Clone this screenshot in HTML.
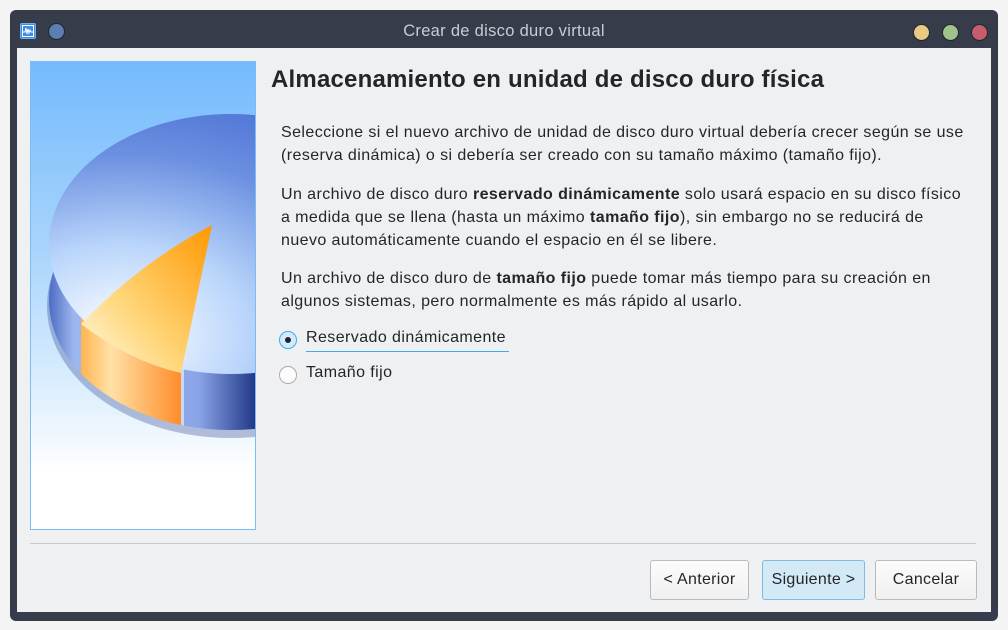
<!DOCTYPE html>
<html><head><meta charset="utf-8"><style>
html,body{margin:0;padding:0;width:1008px;height:630px;background:#f4f4f5;overflow:hidden;font-family:"Liberation Sans","DejaVu Sans",sans-serif;}
.win{position:absolute;left:10px;top:10px;width:988px;height:611px;background:#373c4a;border-radius:6px;}
.title{position:absolute;left:0;right:0;top:12px;text-align:center;color:#c8ccd4;font-size:16.5px;letter-spacing:0.3px}
.content{position:absolute;left:7px;top:38px;width:974px;height:564px;background:#eff0f1;}
.dot{position:absolute;top:14px;width:15px;height:15px;border-radius:50%;border:1px solid #23262e;}
.p{position:absolute;left:264px;white-space:nowrap;font-size:16px;letter-spacing:0.42px;line-height:23px;color:#232629;}
h1{position:absolute;left:254px;top:18px;margin:0;font-size:24px;letter-spacing:0.2px;font-weight:bold;color:#232629;}
.btn{position:absolute;top:512px;height:40px;border:1px solid #b9bbbe;border-radius:3px;background:linear-gradient(#fcfcfc,#f0f0f0);font-size:16px;letter-spacing:0.3px;color:#232629;text-align:center;line-height:38px;box-sizing:border-box;}
.radio{position:absolute;width:18px;height:18px;border-radius:50%;box-sizing:border-box;border:1px solid #a9abae;background:#fcfcfc;}
.lbl{position:absolute;left:289px;font-size:16px;letter-spacing:0.42px;color:#232629}
</style></head><body>
<div class="win">
 <div style="position:absolute;left:10px;top:13px;width:16px;height:16px;background:#3d8ee0;border:1px solid #6ab0f5;box-sizing:border-box;border-radius:2px">
  <svg width="14" height="14" viewBox="0 0 14 14" style="position:absolute;left:0;top:0"><rect x="1.5" y="1.5" width="11" height="11" fill="none" stroke="#fff" stroke-width="1"/><path d="M2 8 L4 8 L5 4 L6 10 L7 5 L8 9 L9 6 L10 8 L12 8" fill="none" stroke="#fff" stroke-width="1"/></svg>
 </div>
 <div style="position:absolute;left:38px;top:13px;width:17px;height:17px;border-radius:50%;background:#5b7fb0;border:1px solid #23262e;box-sizing:border-box"></div>
 <div class="title">Crear de disco duro virtual</div>
 <div class="dot" style="left:903px;background:#eac985"></div>
 <div class="dot" style="left:932px;background:#a1c28a"></div>
 <div class="dot" style="left:961px;background:#c55e6a"></div>
 <div class="content">
  <div style="position:absolute;left:13px;top:13px;width:226px;height:469px;border:1px solid #79bdf7;box-sizing:border-box;overflow:hidden;background:linear-gradient(#74bbfd 0%,#a8d4fc 40%,#e6f3fe 75%,#fff 88%,#fff 100%)">
   <svg width="226" height="469" viewBox="0 0 226 469">
    <defs>
     <radialGradient id="top" cx="0.2" cy="0.85" r="1">
      <stop offset="0" stop-color="#ffffff"/><stop offset="0.35" stop-color="#b9d5fb"/><stop offset="0.7" stop-color="#6b8fe0"/><stop offset="1" stop-color="#4a6fd4"/>
     </radialGradient>
     <linearGradient id="side" gradientUnits="userSpaceOnUse" x1="18" y1="0" x2="226" y2="0"><stop offset="0" stop-color="#4c6cc4"/><stop offset="0.12" stop-color="#9eb6ee"/><stop offset="0.72" stop-color="#8aa4e8"/><stop offset="1" stop-color="#1e3585"/></linearGradient>
     <linearGradient id="oside" x1="0" x2="1"><stop offset="0" stop-color="#ffb552"/><stop offset="0.3" stop-color="#ffe1a6"/><stop offset="1" stop-color="#ff8c2a"/></linearGradient>
     <linearGradient id="owedge" x1="1" y1="0" x2="0" y2="1"><stop offset="0" stop-color="#ff9800"/><stop offset="0.6" stop-color="#ffd67a"/><stop offset="1" stop-color="#fffbe8"/></linearGradient>
     <clipPath id="sc"><ellipse cx="200" cy="238" rx="182" ry="130"/></clipPath>
    </defs>
    <ellipse cx="200" cy="244" rx="184" ry="132" fill="#1e3585" opacity="0.3"/>
    <ellipse cx="200" cy="238" rx="182" ry="130" fill="url(#side)"/>
    <rect x="50" y="200" width="100" height="200" fill="url(#oside)" clip-path="url(#sc)"/>
    <rect x="150" y="200" width="3" height="200" fill="#c8d8f8" clip-path="url(#sc)"/>
    <ellipse cx="200" cy="182" rx="182" ry="130" fill="url(#top)"/>
    <path d="M181 163 L150 311 Q100 300 50 262 Q110 200 181 163Z" fill="url(#owedge)"/>
   </svg>
  </div>
  <h1>Almacenamiento en unidad de disco duro física</h1>
  <div class="p" style="top:73px">Seleccione si el nuevo archivo de unidad de disco duro virtual debería crecer según se use<br>(reserva dinámica) o si debería ser creado con su tamaño máximo (tamaño fijo).</div>
  <div class="p" style="top:135px">Un archivo de disco duro <b>reservado dinámicamente</b> solo usará espacio en su disco físico<br>a medida que se llena (hasta un máximo <b>tamaño fijo</b>), sin embargo no se reducirá de<br>nuevo automáticamente cuando el espacio en él se libere.</div>
  <div class="p" style="top:219px">Un archivo de disco duro de <b>tamaño fijo</b> puede tomar más tiempo para su creación en<br>algunos sistemas, pero normalmente es más rápido al usarlo.</div>
  <div class="radio" style="left:262px;top:283px;border-color:#3daee9;background:#d6ebfa"><div style="position:absolute;left:5px;top:5px;width:6px;height:6px;border-radius:50%;background:#232629"></div></div>
  <div class="lbl" style="top:281px">Reservado dinámicamente</div>
  <div style="position:absolute;left:289px;top:303px;width:203px;height:1px;background:#3daee9"></div>
  <div class="radio" style="left:262px;top:318px"></div>
  <div class="lbl" style="top:316px">Tamaño fijo</div>
  <div style="position:absolute;left:13px;top:495px;width:946px;height:1px;background:#c5c7c9"></div>
  <div class="btn" style="left:633px;width:99px">&lt; Anterior</div>
  <div class="btn" style="left:745px;width:103px;background:#d4e9f6;border-color:#7fbbe2">Siguiente &gt;</div>
  <div class="btn" style="left:858px;width:102px">Cancelar</div>
 </div>
</div>
</body></html>
